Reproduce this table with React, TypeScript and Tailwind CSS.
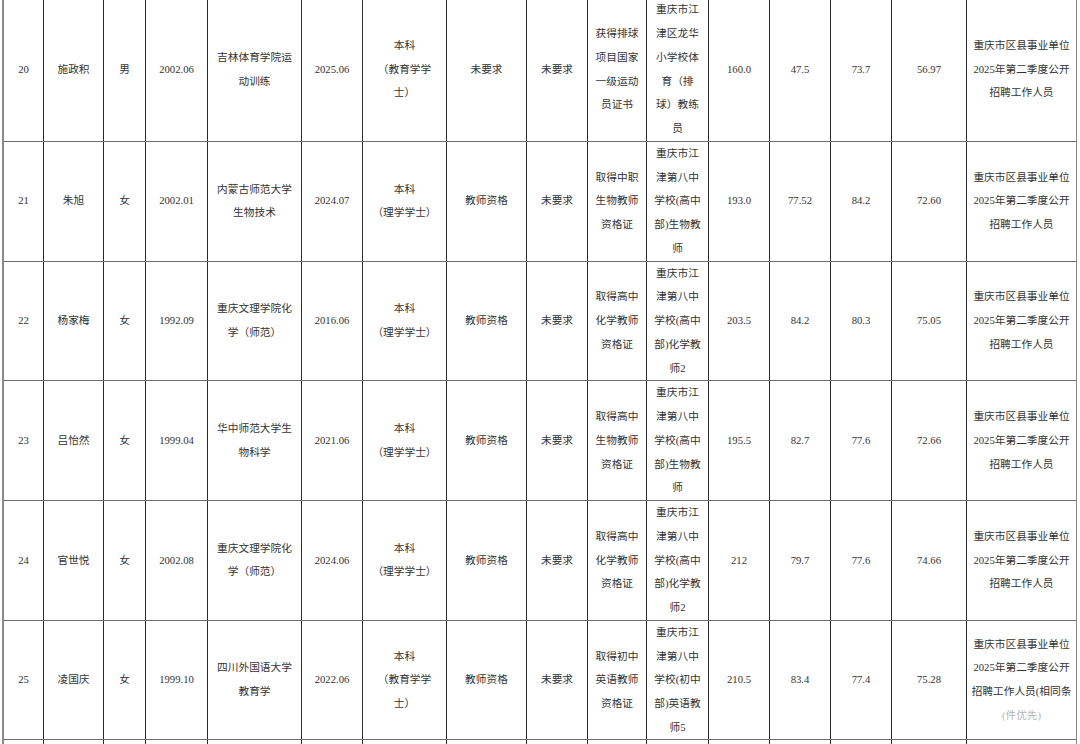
type Row = {
  no: string;
  name: string;
  sex: string;
  birth: string;
  school: string[];
  grad: string;
  degree: string[];
  cert: string;
  work: string;
  qual: string[];
  post: string[];
  written: string;
  interview: string;
  test: string;
  total: string;
  note: string[];
  faded?: string;
};

// column widths incl. the 1px right border
const colW = [
  "w-[40px]", "w-[60px]", "w-[42px]", "w-[62px]", "w-[94px]", "w-[61px]", "w-[84px]", "w-[80px]",
  "w-[61px]", "w-[59px]", "w-[62px]", "w-[61px]", "w-[61px]", "w-[61px]", "w-[75px]", "w-[110px]",
];

const note = ["重庆市区县事业单位", "2025年第二季度公开", "招聘工作人员"];

const rows: Row[] = [
  {
    no: "20", name: "施政积", sex: "男", birth: "2002.06", school: ["吉林体育学院运", "动训练"], grad: "2025.06",
    degree: ["本科", "（教育学学", "士）"], cert: "未要求", work: "未要求",
    qual: ["获得排球", "项目国家", "一级运动", "员证书"],
    post: ["重庆市江", "津区龙华", "小学校体", "育（排", "球）教练", "员"],
    written: "160.0", interview: "47.5", test: "73.7", total: "56.97", note,
  },
  {
    no: "21", name: "朱旭", sex: "女", birth: "2002.01", school: ["内蒙古师范大学", "生物技术"], grad: "2024.07",
    degree: ["本科", "（理学学士）"], cert: "教师资格", work: "未要求",
    qual: ["取得中职", "生物教师", "资格证"],
    post: ["重庆市江", "津第八中", "学校(高中", "部)生物教", "师"],
    written: "193.0", interview: "77.52", test: "84.2", total: "72.60", note,
  },
  {
    no: "22", name: "杨家梅", sex: "女", birth: "1992.09", school: ["重庆文理学院化", "学（师范）"], grad: "2016.06",
    degree: ["本科", "（理学学士）"], cert: "教师资格", work: "未要求",
    qual: ["取得高中", "化学教师", "资格证"],
    post: ["重庆市江", "津第八中", "学校(高中", "部)化学教", "师2"],
    written: "203.5", interview: "84.2", test: "80.3", total: "75.05", note,
  },
  {
    no: "23", name: "吕怡然", sex: "女", birth: "1999.04", school: ["华中师范大学生", "物科学"], grad: "2021.06",
    degree: ["本科", "（理学学士）"], cert: "教师资格", work: "未要求",
    qual: ["取得高中", "生物教师", "资格证"],
    post: ["重庆市江", "津第八中", "学校(高中", "部)生物教", "师"],
    written: "195.5", interview: "82.7", test: "77.6", total: "72.66", note,
  },
  {
    no: "24", name: "官世悦", sex: "女", birth: "2002.08", school: ["重庆文理学院化", "学（师范）"], grad: "2024.06",
    degree: ["本科", "（理学学士）"], cert: "教师资格", work: "未要求",
    qual: ["取得高中", "化学教师", "资格证"],
    post: ["重庆市江", "津第八中", "学校(高中", "部)化学教", "师2"],
    written: "212", interview: "79.7", test: "77.6", total: "74.66", note,
  },
  {
    no: "25", name: "凌国庆", sex: "女", birth: "1999.10", school: ["四川外国语大学", "教育学"], grad: "2022.06",
    degree: ["本科", "（教育学学", "士）"], cert: "教师资格", work: "未要求",
    qual: ["取得初中", "英语教师", "资格证"],
    post: ["重庆市江", "津第八中", "学校(初中", "部)英语教", "师5"],
    written: "210.5", interview: "83.4", test: "77.4", total: "75.28",
    note: ["重庆市区县事业单位", "2025年第二季度公开", "招聘工作人员(相同条"], faded: "(件优先)",
  },
];

function Cell({ i, lines, faded }: { i: number; lines: string[]; faded?: string }) {
  const last = i === colW.length - 1;
  return (
    <div
      className={`${colW[i]} shrink-0 h-full flex flex-col items-center justify-center text-center border-r ${
        last ? "border-[#8a8a8a]" : "border-[#2a2a2a]"
      }`}
    >
      {lines.map((l, k) => (
        <div key={k} className="whitespace-nowrap">{l}</div>
      ))}
      {faded && <div className="whitespace-nowrap text-[#b5b5b5]">{faded}</div>}
    </div>
  );
}

function TableRow({ r, tall }: { r: Row; tall?: boolean }) {
  const cells: string[][] = [
    [r.no], [r.name], [r.sex], [r.birth], r.school, [r.grad], r.degree, [r.cert], [r.work],
    r.qual, r.post, [r.written], [r.interview], [r.test], [r.total], r.note,
  ];
  return (
    <div className={`flex ${tall ? "h-[144px]" : "h-[119.7px]"} border-b border-[#6e6e6e]`}>
      {cells.map((c, i) => (
        <Cell key={i} i={i} lines={c} faded={i === 15 ? r.faded : undefined} />
      ))}
    </div>
  );
}

export default function App() {
  return (
    <div className="w-[1080px] h-[744px] overflow-hidden bg-white">
      <div
        className="-mt-[2px] ml-[2px] w-[1075px] border-l-2 border-[#8a8a8a] text-[10.7px] leading-[23.7px] text-[#333]"
        style={{ fontFamily: '"Liberation Serif", "Noto Sans CJK SC", serif' }}
      >
        {rows.map((r, idx) => (
          <TableRow key={r.no} r={r} tall={idx === 0} />
        ))}
        <div className="flex h-[40px]">
          {colW.map((_, i) => (
            <Cell key={i} i={i} lines={[]} />
          ))}
        </div>
      </div>
    </div>
  );
}
